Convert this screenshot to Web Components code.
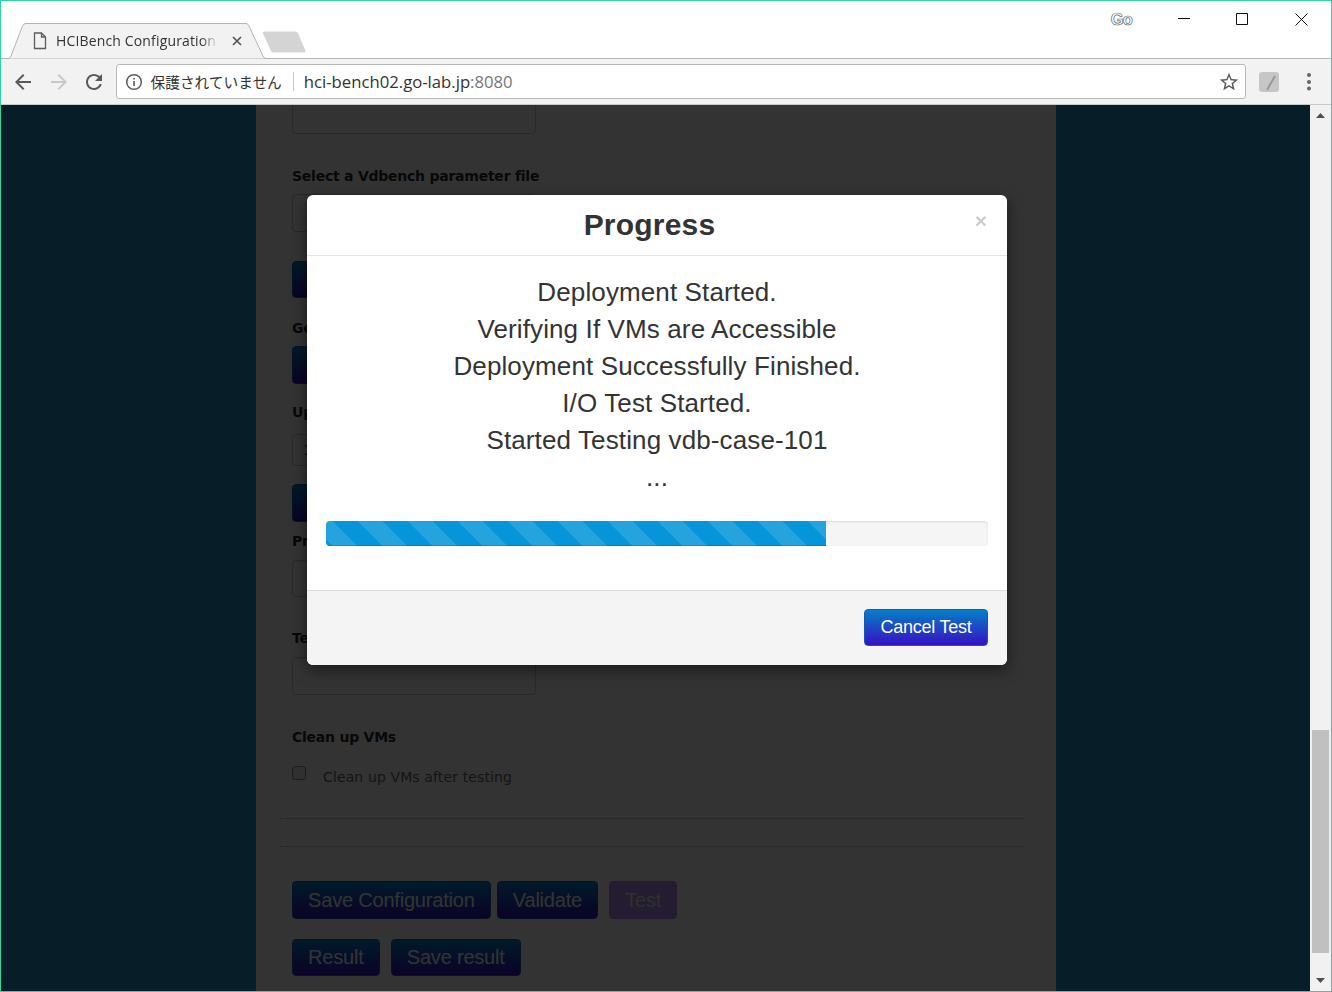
<!DOCTYPE html>
<html lang="ja">
<head>
<meta charset="utf-8">
<title>HCIBench Configuration</title>
<style>
html,body{margin:0;padding:0;width:1332px;height:992px;overflow:hidden;background:#fff}
body{font-family:"Liberation Sans",sans-serif}
</style>
</head>
<body>
<x-window>
  <x-tabbar></x-tabbar>
  <x-toolbar></x-toolbar>
  <x-viewport>
    <x-form>
      <x-field kind="input" top="0" h="29" notop></x-field>
      <x-field kind="label" top="32">Select a Vdbench parameter file</x-field>
      <x-field kind="input" top="8" h="38"></x-field>
      <x-btn top="29" class="stack" h="37">&nbsp;</x-btn>
      <x-field kind="label" top="20">Ge</x-field>
      <x-btn top="8" class="stack">&nbsp;</x-btn>
      <x-field kind="label" top="18">Up</x-field>
      <x-field kind="input" top="12" h="32">1</x-field>
      <x-btn top="18" class="stack">&nbsp;</x-btn>
      <x-field kind="label" top="9">Pr</x-field>
      <x-field kind="input" top="9" h="37"></x-field>
      <x-field kind="label" top="31">Te</x-field>
      <x-field kind="input" top="9" h="38"></x-field>
      <x-field kind="label" top="32">Clean up VMs</x-field>
      <x-check top="19">Clean up VMs after testing</x-check>
      <x-rule top="30"></x-rule>
      <x-rule top="27"></x-rule>
      <x-actions top="34" gap="6">
        <x-btn>Save Configuration</x-btn>
        <x-btn>Validate</x-btn>
        <x-btn disabled style="margin-left:5px">Test</x-btn>
      </x-actions>
      <x-actions top="20" gap="11">
        <x-btn h="37">Result</x-btn>
        <x-btn h="37">Save result</x-btn>
      </x-actions>
    </x-form>
    <x-modal heading="Progress">
      <div>Deployment Started.</div>
      <div>Verifying If VMs are Accessible</div>
      <div>Deployment Successfully Finished.</div>
      <div>I/O Test Started.</div>
      <div>Started Testing vdb-case-101</div>
      <div>...</div>
      <x-progress slot="progress" value="75.5"></x-progress>
      <x-btn slot="footer">Cancel Test</x-btn>
    </x-modal>
    <x-scrollbar></x-scrollbar>
  </x-viewport>
</x-window>

<script>
function shadow(el, html){ const r = el.attachShadow({mode:'open'}); r.innerHTML = html; return r; }

customElements.define('x-window', class extends HTMLElement{
  constructor(){super();shadow(this,`<style>
    :host{display:flex;flex-direction:column;box-sizing:border-box;width:1332px;height:992px;border:1px solid #2fd59f;background:#fff;overflow:hidden}
  </style><slot></slot>`);}
});

customElements.define('x-tabbar', class extends HTMLElement{
  constructor(){super();shadow(this,`<style>
    :host{display:flex;align-items:flex-end;box-sizing:border-box;height:58px;flex:none;border-bottom:1px solid #b4b4b4;background:#fff}
    .tab{position:relative;width:258px;height:36px;margin:0 0 -1px 7px;flex:none;display:flex;align-items:center;box-sizing:border-box;padding:0 0 0 25px}
    .shape{position:absolute;left:0;top:0}
    .file{position:relative;flex:none;width:14px;height:18px;margin-right:9px}
    .title{position:relative;width:170px;flex:none;overflow:hidden;white-space:nowrap;font:14px/18px "Open Sans","Noto Sans",sans-serif;letter-spacing:.15px;color:#333;-webkit-mask-image:linear-gradient(90deg,#000 145px,transparent 162px);mask-image:linear-gradient(90deg,#000 145px,transparent 162px)}
    .tabx{position:relative;flex:none;margin-left:5px;width:12px;height:12px}
    .new{flex:none;margin:0 0 5px -4px}
    .controls{margin-left:auto;align-self:flex-start;display:flex;align-items:center;height:36px}
    .go{font:bold 16.500px/36px "Liberation Sans",sans-serif;letter-spacing:-.6px;color:#fff;-webkit-text-stroke:.7px #666;margin-right:22px;width:22px;text-align:center}
    .wc{width:58.500px;height:36px;display:flex;align-items:center;justify-content:center}
    .wc.x{margin-left:1px}
  </style>
  <div class="tab">
    <svg class="shape" width="258" height="36" viewBox="0 0 258 36"><path d="M0 35.500Q2 35.500 3 33L14.500 3Q15.500 .5 18 .5H238Q240 .5 241 3L255 33Q256 35.500 258 35.500" fill="#f2f2f2" stroke="#b4b4b4"/></svg>
    <svg class="file" viewBox="0 0 14 18"><path d="M1.500 1H8.500L12.500 5V16.500H1.500Z M8.500 1V5H12.500" fill="none" stroke="#5c5c5c" stroke-width="1.300"/></svg>
    <div class="title">HCIBench Configuration</div>
    <svg class="tabx" viewBox="0 0 12 12"><path d="M2 2L10 10M10 2L2 10" stroke="#555" stroke-width="1.700"/></svg>
  </div>
  <svg class="new" width="44" height="22" viewBox="0 0 44 22"><path d="M2 .5H33Q35 .5 36 2L43.500 20Q44 21.500 42 21.500H11Q9.500 21.500 9 20L.8 2Q.5 .5 2 .5Z" fill="#d4d4d4"/></svg>
  <div class="controls">
    <div class="go">Go</div>
    <div class="wc"><svg width="12" height="12" viewBox="0 0 12 12"><path d="M0 5.500H12" stroke="#111"/></svg></div>
    <div class="wc"><svg width="12" height="12" viewBox="0 0 12 12"><path d="M.5 .5H11.500V11.500H.5Z" fill="none" stroke="#111"/></svg></div>
    <div class="wc x"><svg width="13" height="13" viewBox="0 0 13 13"><path d="M.5 .5L12.500 12.500M12.500 .5L.5 12.500" stroke="#111"/></svg></div>
  </div>`);}
});

customElements.define('x-toolbar', class extends HTMLElement{
  constructor(){super();shadow(this,`<style>
    :host{display:flex;align-items:center;box-sizing:border-box;height:46px;flex:none;background:#f2f2f2;border-bottom:1px solid #c8c8c8;padding:0 0 0 10px}
    svg{flex:none;display:block}
    .nav{width:24px;height:24px;margin-right:11.500px}
    .omni{width:1130px;height:35px;margin-left:-2px;box-sizing:border-box;flex:none;background:#fff;border:1px solid #b9b9b9;border-radius:3px;display:flex;align-items:center;padding:0 5px 0 8px}
    .sec{font:14.700px/20px "Noto Sans CJK JP",sans-serif;color:#333;white-space:nowrap;margin-left:8px}
    .sep{width:1px;height:19px;background:#c4c4c4;margin:0 10px 0 11px}
    .url{font:16.700px/20px "Open Sans","Noto Sans",sans-serif;color:#333;white-space:nowrap}
    .url span{color:#777}
    .star{margin-left:auto}
    .ext{width:20px;height:20px;margin-left:13px;filter:blur(.7px)}
    .dots{width:4px;height:18px;margin-left:28px}
  </style>
  <svg class="nav" viewBox="0 0 24 24"><path fill="#5a5a5a" d="M20 11H7.830l5.590-5.590L12 4l-8 8 8 8 1.410-1.410L7.830 13H20v-2z"/></svg>
  <svg class="nav" viewBox="0 0 24 24"><path fill="#c8c8c8" d="M12 4l-1.410 1.410L16.170 11H4v2h12.170l-5.580 5.590L12 20l8-8z"/></svg>
  <svg class="nav" viewBox="0 0 24 24"><path fill="#5a5a5a" d="M17.650 6.350C16.200 4.900 14.210 4 12 4c-4.420 0-7.990 3.580-7.990 8s3.570 8 7.990 8c3.730 0 6.840-2.550 7.730-6h-2.080c-.82 2.330-3.040 4-5.650 4-3.310 0-6-2.690-6-6s2.690-6 6-6c1.660 0 3.140.69 4.220 1.780L13 11h7V4l-2.350 2.350z"/></svg>
  <div class="omni">
    <svg width="18" height="18" viewBox="0 0 18 18"><circle cx="9" cy="9" r="7.300" fill="none" stroke="#5a5a5a" stroke-width="1.500"/><path d="M8.200 5h1.600v1.600H8.200zM8.200 8h1.600v5H8.200z" fill="#5a5a5a"/></svg>
    <span class="sec">保護されていません</span><span class="sep"></span>
    <span class="url">hci-bench02.go-lab.jp<span>:8080</span></span>
    <svg class="star" width="22" height="22" viewBox="0 0 24 24"><path fill="#5a5a5a" d="M22 9.240l-7.190-.62L12 2 9.190 8.630 2 9.240l5.460 4.730L5.820 21 12 17.270 18.180 21l-1.630-7.030L22 9.240zM12 15.400l-3.760 2.270 1-4.280-3.320-2.880 4.380-.38L12 6.100l1.710 4.040 4.380.38-3.320 2.880 1 4.280L12 15.400z"/></svg>
  </div>
  <svg class="ext" viewBox="0 0 20 20"><rect x="0" y="0" width="20" height="20" rx="3" fill="#c6c6c6"/><path d="M8 18L16 4" stroke="#999" stroke-width="2"/></svg>
  <svg class="dots" viewBox="0 0 4 18"><circle cx="2" cy="2" r="2" fill="#666"/><circle cx="2" cy="9" r="2" fill="#666"/><circle cx="2" cy="15.500" r="2" fill="#666"/></svg>`);}
});

customElements.define('x-viewport', class extends HTMLElement{
  constructor(){super();shadow(this,`<style>
    :host{display:flex;flex:1;min-height:0;position:relative;overflow:hidden;background:#2391c8}
    .backdrop{position:absolute;left:0;top:0;bottom:0;right:21px;background:rgba(0,0,0,.8)}
    ::slotted(x-modal){position:absolute;left:306px;top:90px}
  </style><slot></slot><div class="backdrop"></div><slot name="over"></slot>`);}
  connectedCallback(){ const m=this.querySelector('x-modal'); if(m) m.slot='over'; }
});

customElements.define('x-form', class extends HTMLElement{
  constructor(){super();shadow(this,`<style>
    :host{display:flex;flex-direction:column;align-items:flex-start;box-sizing:border-box;width:800px;height:886px;flex:none;margin-left:255px;padding-left:36px;background:#fff;overflow:hidden;font:14px/20px "DejaVu Sans",sans-serif}
    ::slotted(.stack){width:110px}
  </style><slot></slot>`);}
});

customElements.define('x-field', class extends HTMLElement{
  constructor(){super();
    const kind=this.getAttribute('kind'), top=this.getAttribute('top')||0, h=this.getAttribute('h')||20;
    const input=kind==='input';
    shadow(this,`<style>
    :host{display:block;box-sizing:border-box;flex:none;margin-top:${top}px;
      ${input?`width:244px;height:${h}px;background:#fff;border:1px solid #ccc;border-radius:${this.hasAttribute('notop')?'0 0 4px 4px':'4px'};padding-left:10px;color:#444;font:14px/${h-2}px "DejaVu Sans",sans-serif;box-shadow:inset 0 1px 1px rgba(0,0,0,.075);${this.hasAttribute('notop')?'border-top:0;':''}`
      :`font:bold 14px/20px "DejaVu Sans",sans-serif;letter-spacing:-.24px;color:#2a2a2a;white-space:nowrap;`}}
    </style><slot></slot>`);}
});

customElements.define('x-check', class extends HTMLElement{
  constructor(){super();shadow(this,`<style>
    :host{display:flex;align-items:flex-start;height:22px;flex:none;margin-top:${this.getAttribute('top')||0}px;font:14px/22px "DejaVu Sans",sans-serif;letter-spacing:.12px;color:#666;white-space:nowrap}
    input{appearance:none;-webkit-appearance:none;margin:0 17px 0 0;width:14px;height:14px;box-sizing:border-box;background:#eee;border:1px solid #888;border-radius:3px;flex:none}
    span{display:block}
  </style><input type="checkbox" tabindex="-1"><span><slot></slot></span>`);}
});

customElements.define('x-rule', class extends HTMLElement{
  constructor(){super();shadow(this,`<style>
    :host{display:block;flex:none;box-sizing:border-box;width:744px;height:1px;margin:${this.getAttribute('top')||0}px 0 0 -12px;border-top:1px dotted #aaa}
  </style>`);}
});

customElements.define('x-actions', class extends HTMLElement{
  constructor(){super();shadow(this,`<style>
    :host{display:flex;flex:none;gap:${this.getAttribute('gap')||0}px;margin-top:${this.getAttribute('top')||0}px}
  </style><slot></slot>`);}
});

customElements.define('x-btn', class extends HTMLElement{
  constructor(){super();
    const big=!this.hasAttribute('slot');
    const fs=big?20:18;
    const h=+(this.getAttribute('h')||(big?38:37));
    shadow(this,`<style>
    :host{display:block;flex:none;box-sizing:border-box;height:${h}px;margin-top:${this.getAttribute('top')||0}px;padding:0 ${big?15.1:15.5}px;border:1px solid #1a55b4;border-radius:4px;background:linear-gradient(#0580c8,#3610c2);color:#fff;font:${fs}px/${h-2}px "Liberation Sans",sans-serif;white-space:nowrap;text-align:center;letter-spacing:${big?'-.2px':'-.25px'}}
    :host([disabled]){background:#b48cf0;border-color:#b48cf0;color:#e8e8e8}
    </style><slot></slot>`);}
});

customElements.define('x-modal', class extends HTMLElement{
  constructor(){super();shadow(this,`<style>
    :host{display:flex;flex-direction:column;box-sizing:border-box;width:700px;height:470px;background:#fff;border-radius:6px;box-shadow:0 5px 15px rgba(0,0,0,.5);overflow:visible;font-family:"Liberation Sans",sans-serif;color:#333}
    header{position:relative;flex:none;box-sizing:border-box;height:61px;padding-right:15px;border-bottom:1px solid #e5e5e5}
    h4{margin:0;font:bold 30px/60px "Liberation Sans",sans-serif;letter-spacing:.2px;text-align:center;color:#333}
    .close{position:absolute;right:20px;top:14px;font:bold 21px/24px "Liberation Sans",sans-serif;color:#000;opacity:.2}
    .body{flex:1;min-height:0;box-sizing:border-box;padding:17.500px 19px 0;font:26px/37px "Liberation Sans",sans-serif;letter-spacing:.12px;text-align:center}
    .bar{margin-top:25px}
    footer{flex:none;box-sizing:border-box;height:75px;padding:18px 19px 0;display:flex;justify-content:flex-end;background:#f4f4f4;border-top:1px solid #ddd;border-radius:0 0 6px 6px}
  </style>
  <header><h4>${this.getAttribute('heading')||''}</h4><span class="close">×</span></header>
  <div class="body"><slot></slot><div class="bar"><slot name="progress"></slot></div></div>
  <footer><slot name="footer"></slot></footer>`);}
});

customElements.define('x-progress', class extends HTMLElement{
  constructor(){super();const v=this.getAttribute('value')||0;shadow(this,`<style>
    :host{display:block;height:25px;background:#f5f5f5;border-radius:4px;overflow:hidden;box-shadow:inset 0 1px 2px rgba(0,0,0,.1)}
    .fill{height:100%;width:${v}%;background-color:#0595d8;background-image:linear-gradient(45deg,rgba(255,255,255,.13) 25%,transparent 25%,transparent 50%,rgba(255,255,255,.13) 50%,rgba(255,255,255,.13) 75%,transparent 75%,transparent);background-size:50px 50px;background-position:32px 0;box-shadow:inset 0 -1px 0 rgba(0,0,0,.15)}
  </style><div class="fill"></div>`);}
});

customElements.define('x-scrollbar', class extends HTMLElement{
  constructor(){super();shadow(this,`<style>
    :host{position:absolute;right:0;top:0;bottom:0;width:21px;background:#f1f1f1;display:flex;flex-direction:column;align-items:center;justify-content:space-between}
    .arrow{flex:none;height:21px;display:flex;align-items:center;justify-content:center}
    .track{flex:1;width:100%;display:flex;flex-direction:column;justify-content:flex-end;padding-bottom:17px;box-sizing:border-box}
    .thumb{height:223px;width:17px;margin-left:2px;background:#c0c0c0}
  </style>
  <div class="arrow"><svg width="9" height="5" viewBox="0 0 9 5"><path d="M4.500 0L9 5H0Z" fill="#505050"/></svg></div>
  <div class="track"><div class="thumb"></div></div>
  <div class="arrow"><svg width="9" height="5" viewBox="0 0 9 5"><path d="M0 0H9L4.500 5Z" fill="#505050"/></svg></div>`);}
});
</script>
</body>
</html>
